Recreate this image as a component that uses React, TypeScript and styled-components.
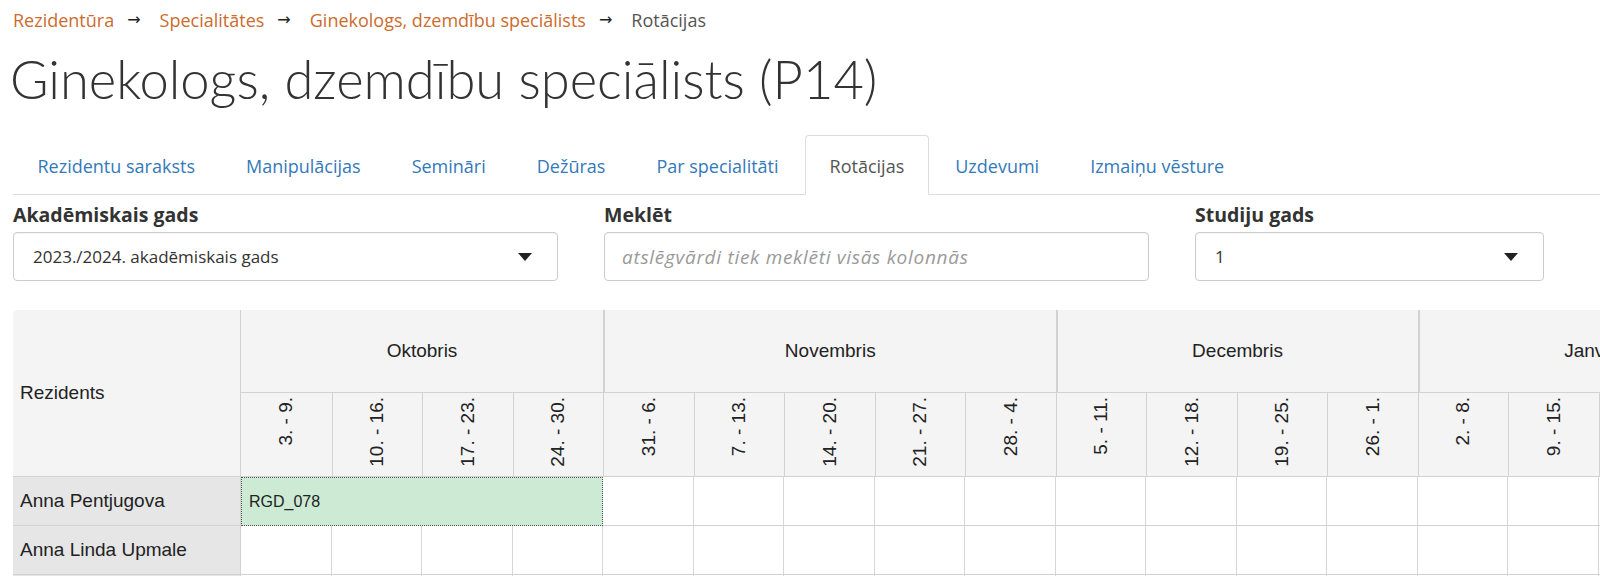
import React from 'react';
import styled, { createGlobalStyle } from 'styled-components';

type Month = {
	name: string;
	weeks: string[];
};

const MONTHS: Month[] = [
	{ name: 'Oktobris', weeks: ['3. - 9.', '10. - 16.', '17. - 23.', '24. - 30.'] },
	{ name: 'Novembris', weeks: ['31. - 6.', '7. - 13.', '14. - 20.', '21. - 27.', '28. - 4.'] },
	{ name: 'Decembris', weeks: ['5. - 11.', '12. - 18.', '19. - 25.', '26. - 1.'] },
	{ name: 'Janvāris', weeks: ['2. - 8.', '9. - 15.', '16. - 22.', '23. - 29.'] },
];

const WEEK_COUNT = MONTHS.reduce((sum, m) => sum + m.weeks.length, 0);

const RESIDENTS = [
	{ name: 'Anna Pentjugova', rotation: { code: 'RGD_078', start: 0, span: 4 } },
	{ name: 'Anna Linda Upmale', rotation: null },
	{ name: 'Andris Bērziņš', rotation: null },
];

const TABS = [
	'Rezidentu saraksts',
	'Manipulācijas',
	'Semināri',
	'Dežūras',
	'Par specialitāti',
	'Rotācijas',
	'Uzdevumi',
	'Izmaiņu vēsture',
];

const GlobalStyle = createGlobalStyle`
	html, body {
		margin: 0;
		padding: 0;
		overflow: hidden;
		background: #fff;
	}
	body {
		font-family: 'Open Sans', 'Noto Sans', sans-serif;
		color: #333;
	}
	* {
		box-sizing: border-box;
	}
`;

const Page = styled.div`
	padding: 0 0 0 13px;
	width: 1600px;
`;

const Breadcrumb = styled.nav`
	display: flex;
	align-items: center;
	height: 40px;
	padding-bottom: 1px;
	font-size: 18px;
`;

const Crumb = styled.a<{ $current?: boolean }>`
	color: ${(p) => (p.$current ? '#555' : '#cc6c2e')};
	text-decoration: none;
`;

const Arrow = styled.span`
	color: #222;
	margin: 0 19px 0 13px;
	font-family: 'DejaVu Sans', sans-serif;
	font-size: 16px;
`;

const Title = styled.h1`
	margin: 0 0 0 -3px;
	height: 95px;
	padding-top: 6px;
	font-family: Lato, 'Open Sans', sans-serif;
	font-size: 52.5px;
	font-weight: 300;
	line-height: 66px;
	color: #333;
`;

const Tabs = styled.ul`
	display: flex;
	margin: 0;
	padding: 0;
	list-style: none;
	border-bottom: 1px solid #ddd;
	height: 60px;
	align-items: flex-end;
`;

const Tab = styled.li<{ $active?: boolean }>`
	margin-right: 2px;
	margin-bottom: -1px;
	height: 60px;
	padding: 2px 23.5px 0;
	display: flex;
	align-items: center;
	font-size: 18px;
	color: ${(p) => (p.$active ? '#555' : '#3479b9')};
	background: ${(p) => (p.$active ? '#fff' : 'transparent')};
	border: 1px solid ${(p) => (p.$active ? '#ddd' : 'transparent')};
	border-bottom-color: ${(p) => (p.$active ? '#fff' : 'transparent')};
	border-radius: 4px 4px 0 0;
`;

const Filters = styled.div`
	display: grid;
	grid-template-columns: 545px 545px 349px;
	column-gap: 46px;
	padding-top: 8px;
`;

const Field = styled.div`
	display: flex;
	flex-direction: column;
`;

const Label = styled.label`
	font-weight: 700;
	font-size: 19.5px;
	line-height: 24px;
	margin-bottom: 5px;
	color: #333;
`;

const SelectBox = styled.div`
	height: 49px;
	border: 1px solid #ccc;
	border-radius: 4px;
	box-shadow: inset 0 1px 1px rgba(0, 0, 0, 0.05);
	display: flex;
	align-items: center;
	justify-content: space-between;
	padding: 0 25px 0 19px;
	font-size: 17px;
	color: #333;
`;

const Caret = styled.span`
	width: 0;
	height: 0;
	border-left: 7px solid transparent;
	border-right: 7px solid transparent;
	border-top: 8px solid #222;
`;

const SearchInput = styled.input`
	height: 49px;
	border: 1px solid #ccc;
	border-radius: 4px;
	box-shadow: inset 0 1px 1px rgba(0, 0, 0, 0.05);
	padding: 0 17px;
	font-family: inherit;
	font-size: 19px;
	color: #333;
	outline: none;

	&::placeholder {
		color: #9a9a9a;
		font-style: italic;
		letter-spacing: 0.7px;
	}
`;

const TableWrap = styled.div`
	margin-top: 29px;
	width: 1587px;
	overflow: hidden;
`;

const Grid = styled.table`
	border-collapse: separate;
	border-spacing: 0;
	table-layout: fixed;
	width: ${228 + WEEK_COUNT * 90.5}px;
	font-family: 'Liberation Sans', Arial, sans-serif;
	font-size: 19px;
	color: #222;
`;

const HeadCorner = styled.th`
	background: #f4f4f4;
	border-top-left-radius: 5px;
	text-align: left;
	font-weight: 400;
	padding: 0 7px;
	vertical-align: middle;
	border-right: 1px solid #d2d2d2;
	border-bottom: 1px solid #d2d2d2;
`;

const MonthCell = styled.th<{ $first?: boolean }>`
	background: #f4f4f4;
	height: 83px;
	font-weight: 400;
	text-align: center;
	padding: 0;
	border-left: ${(p) => (p.$first ? 'none' : '2px solid #d2d2d2')};
	border-bottom: 1px solid #d2d2d2;
	white-space: nowrap;
`;

const WeekCell = styled.th<{ $first?: boolean }>`
	background: #f4f4f4;
	height: 84px;
	font-weight: 400;
	text-align: center;
	vertical-align: top;
	padding: 4px 0 0;
	border-left: ${(p) => (p.$first ? 'none' : '1px solid #d2d2d2')};
	border-bottom: 1px solid #d2d2d2;
`;

const WeekLabel = styled.span`
	display: inline-block;
	writing-mode: vertical-rl;
	transform: rotate(180deg);
	white-space: nowrap;
	line-height: 22px;
`;

const NameCell = styled.td`
	background: #e6e6e6;
	height: 49px;
	padding: 0 7px;
	border-right: 1px solid #d2d2d2;
	border-bottom: 1px solid #d2d2d2;
	white-space: nowrap;
	overflow: hidden;
`;

const DayCell = styled.td`
	height: 49px;
	background: #fff;
	border-right: 1px solid #d6d6d6;
	border-bottom: 1px solid #d2d2d2;
`;

const RotationCell = styled.td`
	height: 49px;
	background: #cdebd4;
	border: 1px dotted #555;
	padding: 0 7px;
	font-size: 16px;
	color: #222;
`;

const App = () => {
	return (
		<Page>
			<GlobalStyle />
			<Breadcrumb>
				<Crumb href="#">Rezidentūra</Crumb>
				<Arrow>→</Arrow>
				<Crumb href="#">Specialitātes</Crumb>
				<Arrow>→</Arrow>
				<Crumb href="#">Ginekologs, dzemdību speciālists</Crumb>
				<Arrow>→</Arrow>
				<Crumb $current>Rotācijas</Crumb>
			</Breadcrumb>
			<Title>Ginekologs, dzemdību speciālists (P14)</Title>
			<Tabs>
				{TABS.map((tab) => (
					<Tab key={tab} $active={tab === 'Rotācijas'}>
						{tab}
					</Tab>
				))}
			</Tabs>
			<Filters>
				<Field>
					<Label>Akadēmiskais gads</Label>
					<SelectBox>
						<span>2023./2024. akadēmiskais gads</span>
						<Caret />
					</SelectBox>
				</Field>
				<Field>
					<Label>Meklēt</Label>
					<SearchInput placeholder="atslēgvārdi tiek meklēti visās kolonnās" />
				</Field>
				<Field>
					<Label>Studiju gads</Label>
					<SelectBox>
						<span>1</span>
						<Caret />
					</SelectBox>
				</Field>
			</Filters>
			<TableWrap>
				<Grid>
					<colgroup>
						<col style={{ width: 228 }} />
						{Array.from({ length: WEEK_COUNT }).map((_, i) => (
							<col key={i} style={{ width: 90.5 }} />
						))}
					</colgroup>
					<thead>
						<tr>
							<HeadCorner rowSpan={2}>Rezidents</HeadCorner>
							{MONTHS.map((m, i) => (
								<MonthCell key={m.name} colSpan={m.weeks.length} $first={i === 0}>
									{m.name}
								</MonthCell>
							))}
						</tr>
						<tr>
							{MONTHS.flatMap((m, mi) =>
								m.weeks.map((w, wi) => (
									<WeekCell key={`${m.name}-${w}`} $first={mi === 0 && wi === 0}>
										<WeekLabel>{w}</WeekLabel>
									</WeekCell>
								))
							)}
						</tr>
					</thead>
					<tbody>
						{RESIDENTS.map((r) => {
							const rot = r.rotation;
							const cells = [];
							for (let i = 0; i < WEEK_COUNT; i++) {
								if (rot && i === rot.start) {
									cells.push(
										<RotationCell key={i} colSpan={rot.span}>
											{rot.code}
										</RotationCell>
									);
									i += rot.span - 1;
								} else {
									cells.push(<DayCell key={i} />);
								}
							}
							return (
								<tr key={r.name}>
									<NameCell>{r.name}</NameCell>
									{cells}
								</tr>
							);
						})}
					</tbody>
				</Grid>
			</TableWrap>
		</Page>
	);
};

export default App;
